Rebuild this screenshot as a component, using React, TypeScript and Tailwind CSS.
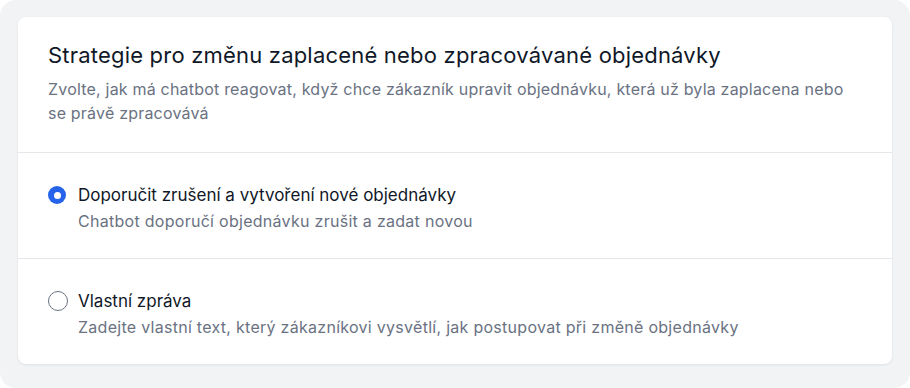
import { useState } from "react";

interface Option {
  id: string;
  label: string;
  description: string;
}

const options: Option[] = [
  {
    id: "recommend",
    label: "Doporučit zrušení a vytvoření nové objednávky",
    description: "Chatbot doporučí objednávku zrušit a zadat novou",
  },
  {
    id: "custom",
    label: "Vlastní zpráva",
    description: "Zadejte vlastní text, který zákazníkovi vysvětlí, jak postupovat při změně objednávky",
  },
];

function App() {
  const [selected, setSelected] = useState("recommend");

  return (
    <div className="h-screen bg-white font-['Inter',sans-serif]">
      <div className="h-full rounded-2xl bg-[#f2f3f5] px-[18px] pt-[17px]">
        {/* Card */}
        <div className="rounded-lg bg-white shadow-[0_1px_3px_rgba(0,0,0,0.08)]">
          {/* Header */}
          <div className="border-b border-gray-200 px-[30px] pt-[24px] pb-[27px]">
            <h2 className="text-[22px] leading-7 tracking-[0.2px] text-gray-900">
              Strategie pro změnu zaplacené nebo zpracovávané objednávky
            </h2>
            <p className="mt-[8px] text-base leading-6 tracking-[0.2px] text-gray-500">
              Zvolte, jak má chatbot reagovat, když chce zákazník upravit objednávku, která už byla zaplacena nebo se
              právě zpracovává
            </p>
          </div>

          {/* Options */}
          {options.map((option, i) => (
            <label
              key={option.id}
              className={`flex cursor-pointer items-start gap-[10px] px-[30px] pt-[30px] pb-[25px] ${
                i < options.length - 1 ? "border-b border-gray-200" : ""
              }`}
              onClick={() => setSelected(option.id)}
            >
              <span className="flex h-6 w-5 items-center justify-center">
                {selected === option.id ? (
                  <span className="-ml-0.5 flex h-[18px] w-[18px] items-center justify-center rounded-full bg-[#2563eb]">
                    <span className="h-[7px] w-[7px] rounded-full bg-white" />
                  </span>
                ) : (
                  <span className="h-5 w-5 rounded-full border-[1.5px] border-gray-500 bg-white" />
                )}
              </span>
              <span className="flex flex-col">
                <span className="text-[17px] leading-6 text-gray-900">{option.label}</span>
                <span className="mt-0.5 text-base leading-6 tracking-[0.28px] text-gray-500">{option.description}</span>
              </span>
            </label>
          ))}
        </div>
      </div>
    </div>
  );
}

export default App;
